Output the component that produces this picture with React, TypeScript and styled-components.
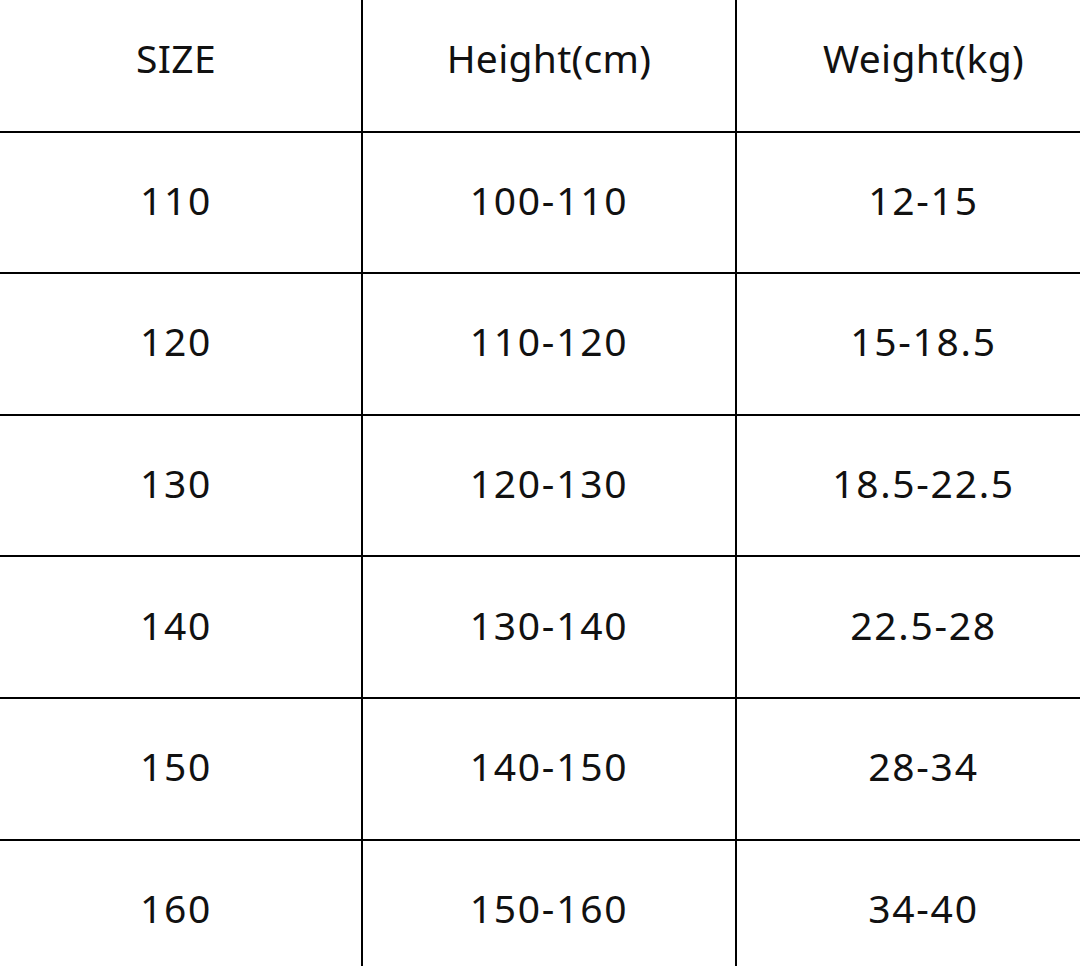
import styled, { createGlobalStyle } from "styled-components";

const GlobalStyle = createGlobalStyle`
  html, body {
    margin: 0;
    padding: 0;
    background: #ffffff;
    overflow: hidden;
  }
`;

const Page = styled.div`
  width: 1080px;
  height: 966px;
  overflow: hidden;
  background: #ffffff;
`;

const Grid = styled.div`
  display: grid;
  grid-template-columns: 370px 372px 373px;
  grid-auto-rows: 139.6px;
  gap: 2px;
  background: #000000;
  margin-top: -9px;
  margin-left: -9px;
  width: max-content;
`;

const Cell = styled.div<{ $numeric?: boolean }>`
  background: #ffffff;
  display: flex;
  align-items: center;
  justify-content: center;
  padding-bottom: 6px;
  font-family: "Noto Sans", "Open Sans", sans-serif;
  font-size: 39px;
  color: #111111;
  letter-spacing: ${(p) => (p.$numeric ? "1.7px" : "0.3px")};
`;

const rows = [
  ["SIZE", "Height(cm)", "Weight(kg)"],
  ["110", "100-110", "12-15"],
  ["120", "110-120", "15-18.5"],
  ["130", "120-130", "18.5-22.5"],
  ["140", "130-140", "22.5-28"],
  ["150", "140-150", "28-34"],
  ["160", "150-160", "34-40"],
  ["", "", ""],
];

const App = () => {
  return (
    <Page>
      <GlobalStyle />
      <Grid>
        {rows.map((row, i) =>
          row.map((text, j) => (
            <Cell key={`${i}-${j}`} $numeric={i > 0}>
              {text}
            </Cell>
          ))
        )}
      </Grid>
    </Page>
  );
};

export default App;
